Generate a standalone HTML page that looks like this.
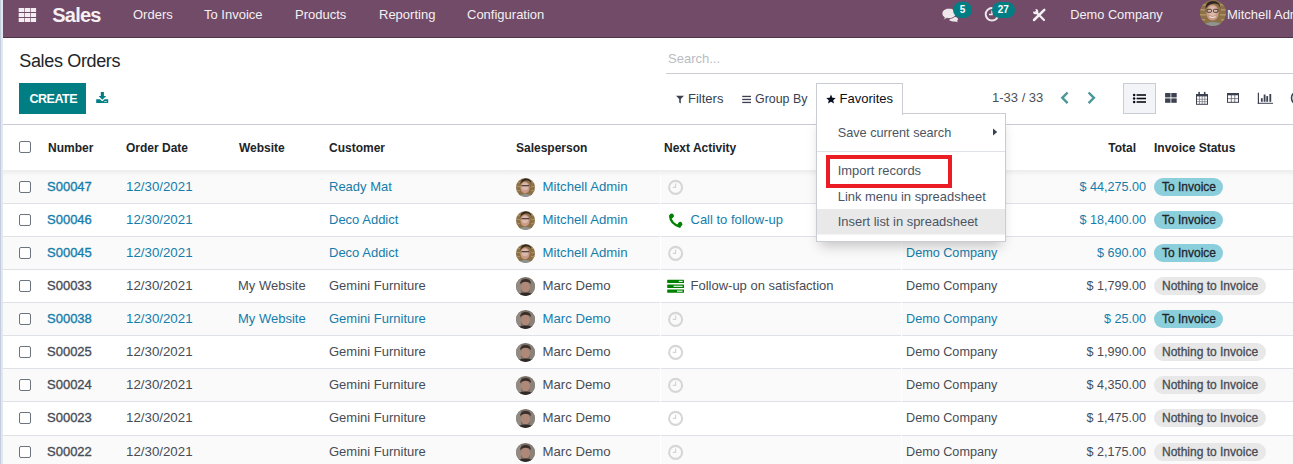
<!DOCTYPE html>
<html><head><meta charset="utf-8">
<style>
html,body{margin:0;padding:0;}
body{width:1293px;height:464px;overflow:hidden;position:relative;background:#fff;font-family:"Liberation Sans",sans-serif;color:#4c4c4c;}
.a{position:absolute;}
.t{position:absolute;white-space:nowrap;line-height:20px;font-size:13px;z-index:2;}
svg{position:absolute;left:0;top:0;overflow:visible;}
#strip{left:0;top:0;width:3px;height:464px;background:linear-gradient(to right,#c3cddc 0,#c3cddc 1px,#dfe6ef 1px,#e3e9f1 3px);z-index:10;}
#nav{left:3px;top:0;width:1290px;height:37px;background:#714b67;border-bottom:1px solid #4f3448;}
.nv{color:#f4f0f3;}
.hdr{font-weight:bold;font-size:12px;color:#212529;}
.line{position:absolute;height:1px;background:#dee2e6;z-index:1;}
.cb{position:absolute;width:10px;height:10px;border:1px solid #6c757d;border-radius:2px;background:#fff;z-index:2;}
.info{color:#157dab;}
.gray{color:#484c55;}
.badge{position:absolute;height:18px;border-radius:9px;font-size:11px;font-weight:bold;line-height:18px;white-space:nowrap;z-index:2;}
.bi{background:#8ccfdc;color:#212529;}
.bn{background:#e8e8e8;color:#474b53;}
.dd{color:#4b5563;}
</style></head>
<body>
<div id="strip" class="a"></div>
<div id="nav" class="a"></div>
<svg width="1293" height="40" style="z-index:3">
<g fill="#f1edf0">
<rect x="18.7" y="8" width="5.4" height="4"/><rect x="24.7" y="8" width="5.4" height="4"/><rect x="30.7" y="8" width="5.4" height="4"/>
<rect x="18.7" y="13" width="5.4" height="4"/><rect x="24.7" y="13" width="5.4" height="4"/><rect x="30.7" y="13" width="5.4" height="4"/>
<rect x="18.7" y="18" width="5.4" height="4"/><rect x="24.7" y="18" width="5.4" height="4"/><rect x="30.7" y="18" width="5.4" height="4"/>
</g>
<!-- chat icon -->
<g fill="#eee8ec">
<path d="M951.5,16.5 c1.8,0 6.5,0.2 6.5,2.6 c0,0.9 -0.5,1.5 -1.2,1.9 l1.4,1.2 l-3.5,-0.7 c-1.5,0.1 -3.8,-0.2 -5.5,-1.2z"/>
</g>
<path d="M949,8.2 c3.9,0 7,2.3 7,5.2 s-3.1,5.2 -7,5.2 c-0.8,0 -1.6,-0.1 -2.3,-0.3 l-3.4,2 l1.1,-2.9 c-1.5,-1 -2.4,-2.4 -2.4,-4 c0,-2.9 3.1,-5.2 7,-5.2z" fill="#eee8ec" stroke="#714b67" stroke-width="0.9"/>
<rect x="953" y="1.8" width="19" height="16.3" rx="8.2" fill="#017e84"/>
<text x="962.5" y="13" font-family="Liberation Sans" font-weight="bold" font-size="10" fill="#fff" text-anchor="middle">5</text>
<!-- activity clock -->
<circle cx="992" cy="14.3" r="6.3" fill="none" stroke="#eee8ec" stroke-width="2"/>
<path d="M992,10.5 v4 h-3" fill="none" stroke="#eee8ec" stroke-width="1.4"/>
<rect x="992" y="1.9" width="23" height="16.2" rx="8.1" fill="#017e84"/>
<text x="1003.3" y="13" font-family="Liberation Sans" font-weight="bold" font-size="10" fill="#fff" text-anchor="middle">27</text>
<!-- tools -->
<g stroke="#f4f0f3" fill="none">
<line x1="1034" y1="20" x2="1044.3" y2="9.8" stroke-width="2.5" stroke-linecap="round"/>
<line x1="1036.8" y1="12.8" x2="1044" y2="20" stroke-width="2.2" stroke-linecap="round"/>
</g>
<circle cx="1035.7" cy="11.7" r="2.6" fill="#f4f0f3"/>
<circle cx="1034.3" cy="10.3" r="1.5" fill="#714b67"/>
</svg>
<div class="a" style="left:1200px;top:0px;width:26px;height:26px;border-radius:50%;overflow:hidden;z-index:3"><svg width="26" height="26" viewBox="1200 0 26 26"><g>
<rect x="1200" y="0" width="26" height="26" fill="#8c7148"/>
<g fill="#b89b68" opacity=".8">
<rect x="1200" y="4" width="6" height="1.6"/><rect x="1220" y="4" width="6" height="1.6"/>
<rect x="1200" y="9" width="5" height="1.6"/><rect x="1221" y="9" width="5" height="1.6"/>
<rect x="1200" y="14" width="6" height="1.6"/><rect x="1220" y="14" width="6" height="1.6"/>
<rect x="1200" y="19" width="5" height="1.6"/><rect x="1221" y="19" width="5" height="1.6"/>
</g>
<ellipse cx="1212.5" cy="12.5" rx="6.2" ry="8" fill="#c99a86"/>
<ellipse cx="1212.5" cy="11" rx="4.5" ry="5" fill="#dcb8a8"/>
<path d="M1205.5,9 q0,-8 7.5,-8 q7,0 7.5,7.5 q-1,-3.5 -3,-4.5 q-3,-1 -6,0 q-4,1 -6,5z" fill="#2f2622"/>
<g fill="none" stroke="#3a302c" stroke-width="0.9"><rect x="1207" y="9.3" width="4.5" height="3" rx="1"/><rect x="1213.5" y="9.3" width="4.5" height="3" rx="1"/></g>
<path d="M1209.5,16.5 q3,2 6,0" stroke="#f2e6e0" stroke-width="1.1" fill="none"/>
<path d="M1202,27 q3,-5 11,-5 q8,0 11,5z" fill="#8d9492"/>
</g>
</svg></div>

<div class="t nv" style="left:52.3px;top:5px;font-size:20px;font-weight:bold;letter-spacing:-0.8px;">Sales</div>
<div class="t nv" style="left:133px;top:5px;font-size:13px;">Orders</div>
<div class="t nv" style="left:204px;top:5px;font-size:13px;">To Invoice</div>
<div class="t nv" style="left:295px;top:5px;font-size:13px;">Products</div>
<div class="t nv" style="left:379px;top:5px;font-size:13px;">Reporting</div>
<div class="t nv" style="left:467px;top:5px;font-size:13px;">Configuration</div>
<div class="t nv" style="left:1070.2px;top:5px;font-size:12.8px;">Demo Company</div>
<div class="t nv" style="left:1227px;top:5px;font-size:13px;">Mitchell Admin</div>
<div class="t " style="left:19.3px;top:51px;font-size:18px;color:#212529;letter-spacing:-0.35px;">Sales Orders</div>
<div class="a" style="left:19px;top:83px;width:67px;height:31px;background:#017e84;"></div>
<div class="t " style="left:29.4px;top:89px;font-size:12.5px;color:#fff;font-weight:bold;letter-spacing:-0.45px;">CREATE</div>
<div class="t " style="left:668px;top:49px;font-size:13px;color:#b8bcc4;">Search...</div>
<div class="a" style="left:666px;top:73px;width:627px;height:1px;background:#c9ccd2;"></div>
<div class="t " style="left:688px;top:89px;font-size:13px;color:#374151;">Filters</div>
<div class="t " style="left:755px;top:89px;font-size:12.4px;color:#374151;">Group By</div>
<div class="t " style="left:992px;top:88px;font-size:13px;color:#495057;">1-33 / 33</div>
<svg width="1293" height="130" style="z-index:3">
<!-- download -->
<g fill="#017e84">
<path d="M100.8,92 h3.1 v4 h2.2 l-3.75,3.8 l-3.75,-3.8 h2.2z"/>
<path d="M96.2,99.2 h3.8 l2.3,2.3 l2.3,-2.3 h3.6 v3.8 h-12z"/>
</g>
<rect x="104.3" y="101.2" width="2.5" height="0.9" fill="#cfe6e7"/>
<!-- filter -->
<path d="M676,95.8 h8 l-3.2,3.2 v4.6 l-1.6,-1.2 v-3.4z" fill="#3c4050"/>
<!-- group by -->
<g fill="#3c4050">
<rect x="742.2" y="95.8" width="8.8" height="1.3"/>
<rect x="742.2" y="98.8" width="8.8" height="1.3"/>
<rect x="742.2" y="101.8" width="8.8" height="1.3"/>
</g>
<!-- chevrons -->
<g fill="none" stroke="#4a9699" stroke-width="2.4" stroke-linecap="butt">
<path d="M1067.6,92.5 l-5.3,5.3 l5.3,5.3"/>
<path d="M1088.6,92.5 l5.3,5.3 l-5.3,5.3"/>
</g>
<!-- view switcher active box -->
<rect x="1123.5" y="83.5" width="32" height="30" fill="#f3f4f8" stroke="#c9ccd2" stroke-width="1"/>
<!-- list icon -->
<g fill="#0b0d14">
<circle cx="1134.1" cy="95" r="1.25"/><circle cx="1134.1" cy="98.5" r="1.25"/><circle cx="1134.1" cy="102" r="1.25"/>
<rect x="1136.6" y="94.2" width="9.4" height="1.6"/><rect x="1136.6" y="97.7" width="9.4" height="1.6"/><rect x="1136.6" y="101.2" width="9.4" height="1.6"/>
</g>
<!-- kanban -->
<g fill="#3d4250">
<rect x="1165.1" y="93" width="5.4" height="4.4"/><rect x="1171.3" y="93" width="5.4" height="4.4"/>
<rect x="1165.1" y="98.4" width="5.4" height="4.4"/><rect x="1171.3" y="98.4" width="5.4" height="4.4"/>
</g>
<!-- calendar -->
<g>
<rect x="1196.5" y="94.5" width="11" height="9.8" fill="#fff" stroke="#3d4250" stroke-width="1"/>
<rect x="1196" y="94" width="12" height="2.4" fill="#3d4250"/>
<rect x="1198.3" y="91.9" width="1.6" height="3" fill="#3d4250"/><rect x="1203.9" y="91.9" width="1.6" height="3" fill="#3d4250"/>
<g fill="#3d4250" opacity=".75">
<rect x="1199.2" y="96" width="0.7" height="8"/><rect x="1201.8" y="96" width="0.7" height="8"/><rect x="1204.5" y="96" width="0.7" height="8"/>
<rect x="1196.5" y="98.8" width="11" height="0.7"/><rect x="1196.5" y="101.4" width="11" height="0.7"/>
</g>
</g>
<!-- pivot -->
<g>
<rect x="1227.5" y="93.5" width="11" height="8.8" fill="#fff" stroke="#3d4250" stroke-width="1"/>
<rect x="1227" y="93" width="12" height="2.3" fill="#3d4250"/>
<g fill="#3d4250" opacity=".8">
<rect x="1230.9" y="95" width="0.8" height="7.5"/><rect x="1234.4" y="95" width="0.8" height="7.5"/>
<rect x="1227.5" y="98.3" width="11" height="0.8"/>
</g>
</g>
<!-- graph -->
<g fill="#3d4250">
<rect x="1257.8" y="92.7" width="1.2" height="11.1"/>
<rect x="1257.8" y="102.8" width="15.2" height="1"/>
<rect x="1260.9" y="98.2" width="1.8" height="3.6"/>
<rect x="1263.7" y="94.5" width="1.8" height="7.3"/>
<rect x="1266.3" y="96.1" width="1.8" height="5.7"/>
<rect x="1269.4" y="94" width="1.8" height="7.8"/>
</g>
<circle cx="1298" cy="98" r="6.5" fill="none" stroke="#3d4250" stroke-width="1.6"/>
</svg>
<div class="line" style="left:3px;top:124px;width:1290px;background:#c9ccd2;"></div>
<div class="cb" style="left:19px;top:141px;"></div>
<div class="t hdr" style="left:48px;top:138px;font-size:12px;">Number</div>
<div class="t hdr" style="left:126px;top:138px;font-size:12px;">Order Date</div>
<div class="t hdr" style="left:239px;top:138px;font-size:12px;">Website</div>
<div class="t hdr" style="left:329px;top:138px;font-size:12px;">Customer</div>
<div class="t hdr" style="left:516px;top:138px;font-size:12px;">Salesperson</div>
<div class="t hdr" style="left:664px;top:138px;font-size:12px;">Next Activity</div>
<div class="t hdr" style="left:1154px;top:138px;font-size:12px;">Invoice Status</div>
<div class="t hdr" style="right:157px;top:138px;font-size:12px;">Total</div>
<div class="a" style="left:3px;top:170px;width:1290px;height:6px;background:linear-gradient(#ececec,rgba(250,250,250,0));z-index:3"></div>
<div class="a" style="left:3px;top:170px;width:1290px;height:33px;background:#fafafa;"></div>
<div class="cb" style="left:19px;top:181px;"></div>
<div class="t info" style="left:47px;top:177px;font-size:13px;-webkit-text-stroke:0.35px currentColor;">S00047</div>
<div class="t info" style="left:126px;top:177px;font-size:13.3px;">12/30/2021</div>
<div class="t info" style="left:329px;top:177px;font-size:13px;">Ready Mat</div>
<div class="a" style="left:516px;top:178px;width:19px;height:19px;border-radius:50%;overflow:hidden;z-index:2"><svg width="19" height="19" viewBox="516 178 19 19"><g><rect x="516" y="178" width="19" height="19" fill="#8a6f47"/>
<g fill="#b39763" opacity=".8"><rect x="516" y="182" width="4" height="1.2"/><rect x="531" y="182" width="4" height="1.2"/><rect x="516" y="186" width="4" height="1.2"/><rect x="531" y="186" width="4" height="1.2"/><rect x="516" y="190" width="4" height="1.2"/><rect x="531" y="190" width="4" height="1.2"/></g>
<ellipse cx="525.0" cy="187.5" rx="4.6" ry="6" fill="#c99a86"/>
<ellipse cx="525.0" cy="186.5" rx="3.3" ry="3.8" fill="#dcb8a8"/>
<path d="M520.5,184.5 q0,-6 5.5,-6 q5,0 5.5,5.5 q-1,-2.5 -2.5,-3.3 q-2,-0.8 -4.5,0 q-3,0.8 -4,3.8z" fill="#2f2622"/>
<rect x="521.5" y="185.0" width="7.5" height="1.3" fill="#3a302c" opacity=".85"/>
<path d="M517,198 q2,-4 8.5,-4 q6.5,0 8.5,4z" fill="#8d9492"/></g></svg></div>
<div class="t info" style="left:542.5px;top:177px;font-size:13.2px;">Mitchell Admin</div>
<svg width="1293" height="464" style="z-index:2"><circle cx="675.6" cy="187.4" r="6.5" fill="none" stroke="#d6d6d6" stroke-width="2.1"/>
<path d="M675.6,183.6 v3.8 h-2.8" fill="none" stroke="#d4d4d4" stroke-width="1.2"/></svg>
<div class="t info" style="left:906px;top:177px;font-size:12.65px;">Demo Company</div>
<div class="t info" style="right:147px;top:177px;font-size:12.6px;">$ 44,275.00</div>
<div class="badge bi" style="left:1154px;top:178px;width:69px;"><span style="position:absolute;left:8px;top:0;font-size:12px;font-weight:normal;-webkit-text-stroke:0.3px currentColor">To Invoice</span></div>
<div class="a" style="left:3px;top:203px;width:1290px;height:33px;background:#fff;"></div>
<div class="line" style="left:3px;top:203px;width:1290px;"></div>
<div class="cb" style="left:19px;top:214px;"></div>
<div class="t info" style="left:47px;top:210px;font-size:13px;-webkit-text-stroke:0.35px currentColor;">S00046</div>
<div class="t info" style="left:126px;top:210px;font-size:13.3px;">12/30/2021</div>
<div class="t info" style="left:329px;top:210px;font-size:13px;">Deco Addict</div>
<div class="a" style="left:516px;top:211px;width:19px;height:19px;border-radius:50%;overflow:hidden;z-index:2"><svg width="19" height="19" viewBox="516 211 19 19"><g><rect x="516" y="211" width="19" height="19" fill="#8a6f47"/>
<g fill="#b39763" opacity=".8"><rect x="516" y="215" width="4" height="1.2"/><rect x="531" y="215" width="4" height="1.2"/><rect x="516" y="219" width="4" height="1.2"/><rect x="531" y="219" width="4" height="1.2"/><rect x="516" y="223" width="4" height="1.2"/><rect x="531" y="223" width="4" height="1.2"/></g>
<ellipse cx="525.0" cy="220.5" rx="4.6" ry="6" fill="#c99a86"/>
<ellipse cx="525.0" cy="219.5" rx="3.3" ry="3.8" fill="#dcb8a8"/>
<path d="M520.5,217.5 q0,-6 5.5,-6 q5,0 5.5,5.5 q-1,-2.5 -2.5,-3.3 q-2,-0.8 -4.5,0 q-3,0.8 -4,3.8z" fill="#2f2622"/>
<rect x="521.5" y="218.0" width="7.5" height="1.3" fill="#3a302c" opacity=".85"/>
<path d="M517,231 q2,-4 8.5,-4 q6.5,0 8.5,4z" fill="#8d9492"/></g></svg></div>
<div class="t info" style="left:542.5px;top:210px;font-size:13.2px;">Mitchell Admin</div>
<svg width="1293" height="464" style="z-index:2"><g fill="#008000">
<path d="M670.2,216.5 q0.2,7 9.6,10.2" stroke="#008000" stroke-width="2.3" stroke-linecap="round" fill="none"/>
<ellipse cx="671.6" cy="215.9" rx="2.3" ry="2.4" transform="rotate(-35 671.6 215.9)"/>
<ellipse cx="680" cy="224.3" rx="2.5" ry="2.2" transform="rotate(-40 680 224.3)"/>
</g></svg></div>
<div class="t info" style="left:690.5px;top:210px;font-size:13px;">Call to follow-up</div>
<div class="t info" style="left:906px;top:210px;font-size:12.65px;">Demo Company</div>
<div class="t info" style="right:147px;top:210px;font-size:12.6px;">$ 18,400.00</div>
<div class="badge bi" style="left:1154px;top:211px;width:69px;"><span style="position:absolute;left:8px;top:0;font-size:12px;font-weight:normal;-webkit-text-stroke:0.3px currentColor">To Invoice</span></div>
<div class="a" style="left:3px;top:236px;width:1290px;height:33px;background:#fafafa;"></div>
<div class="line" style="left:3px;top:236px;width:1290px;"></div>
<div class="cb" style="left:19px;top:247px;"></div>
<div class="t info" style="left:47px;top:243px;font-size:13px;-webkit-text-stroke:0.35px currentColor;">S00045</div>
<div class="t info" style="left:126px;top:243px;font-size:13.3px;">12/30/2021</div>
<div class="t info" style="left:329px;top:243px;font-size:13px;">Deco Addict</div>
<div class="a" style="left:516px;top:244px;width:19px;height:19px;border-radius:50%;overflow:hidden;z-index:2"><svg width="19" height="19" viewBox="516 244 19 19"><g><rect x="516" y="244" width="19" height="19" fill="#8a6f47"/>
<g fill="#b39763" opacity=".8"><rect x="516" y="248" width="4" height="1.2"/><rect x="531" y="248" width="4" height="1.2"/><rect x="516" y="252" width="4" height="1.2"/><rect x="531" y="252" width="4" height="1.2"/><rect x="516" y="256" width="4" height="1.2"/><rect x="531" y="256" width="4" height="1.2"/></g>
<ellipse cx="525.0" cy="253.5" rx="4.6" ry="6" fill="#c99a86"/>
<ellipse cx="525.0" cy="252.5" rx="3.3" ry="3.8" fill="#dcb8a8"/>
<path d="M520.5,250.5 q0,-6 5.5,-6 q5,0 5.5,5.5 q-1,-2.5 -2.5,-3.3 q-2,-0.8 -4.5,0 q-3,0.8 -4,3.8z" fill="#2f2622"/>
<rect x="521.5" y="251.0" width="7.5" height="1.3" fill="#3a302c" opacity=".85"/>
<path d="M517,264 q2,-4 8.5,-4 q6.5,0 8.5,4z" fill="#8d9492"/></g></svg></div>
<div class="t info" style="left:542.5px;top:243px;font-size:13.2px;">Mitchell Admin</div>
<svg width="1293" height="464" style="z-index:2"><circle cx="675.6" cy="253.4" r="6.5" fill="none" stroke="#d6d6d6" stroke-width="2.1"/>
<path d="M675.6,249.6 v3.8 h-2.8" fill="none" stroke="#d4d4d4" stroke-width="1.2"/></svg>
<div class="t info" style="left:906px;top:243px;font-size:12.65px;">Demo Company</div>
<div class="t info" style="right:147px;top:243px;font-size:12.6px;">$ 690.00</div>
<div class="badge bi" style="left:1154px;top:244px;width:69px;"><span style="position:absolute;left:8px;top:0;font-size:12px;font-weight:normal;-webkit-text-stroke:0.3px currentColor">To Invoice</span></div>
<div class="a" style="left:3px;top:269px;width:1290px;height:33px;background:#fff;"></div>
<div class="line" style="left:3px;top:269px;width:1290px;"></div>
<div class="cb" style="left:19px;top:280px;"></div>
<div class="t gray" style="left:47px;top:276px;font-size:13px;-webkit-text-stroke:0.35px currentColor;">S00033</div>
<div class="t gray" style="left:126px;top:276px;font-size:13.3px;">12/30/2021</div>
<div class="t gray" style="left:238px;top:276px;font-size:13px;">My Website</div>
<div class="t gray" style="left:329px;top:276px;font-size:13px;">Gemini Furniture</div>
<div class="a" style="left:516px;top:277px;width:19px;height:19px;border-radius:50%;overflow:hidden;z-index:2"><svg width="19" height="19" viewBox="516 277 19 19"><g><rect x="516" y="277" width="19" height="19" fill="#7a7068"/>
<rect x="516" y="277" width="5" height="19" fill="#948a82"/>
<rect x="530" y="277" width="5" height="19" fill="#8a8279"/>
<ellipse cx="525.5" cy="287.0" rx="4.6" ry="5.4" fill="#b08878"/>
<path d="M520.0,284.5 q0,-5.5 5.5,-5.5 q5.5,0 5.5,5 q-1.5,-2.3 -5.5,-2.3 q-4,0 -5.5,2.8z" fill="#3a2e2b"/>
<path d="M516,297 q2,-4.5 9.5,-4.5 q7.5,0 9.5,4.5z" fill="#2f2927"/></g></svg></div>
<div class="t gray" style="left:542.5px;top:276px;font-size:13.2px;">Marc Demo</div>
<svg width="1293" height="464" style="z-index:2"><g fill="#008000">
<rect x="667.2" y="279.7" width="16.8" height="3.3" rx="0.5"/><rect x="667.2" y="284.59999999999997" width="16.8" height="3.3" rx="0.5"/><rect x="667.2" y="289.5" width="16.8" height="3.3" rx="0.5"/></g>
<g fill="#fff"><rect x="678.8" y="280.8" width="3.8" height="1.1"/><rect x="673.5" y="285.7" width="9.1" height="1.1"/><rect x="677" y="290.59999999999997" width="5.6" height="1.1"/></g></svg></div>
<div class="t gray" style="left:690.5px;top:276px;font-size:13px;">Follow-up on satisfaction</div>
<div class="t gray" style="left:906px;top:276px;font-size:12.65px;">Demo Company</div>
<div class="t gray" style="right:147px;top:276px;font-size:12.6px;">$ 1,799.00</div>
<div class="badge bn" style="left:1154px;top:277px;width:112px;"><span style="position:absolute;left:8px;top:0;font-size:12px;font-weight:normal;-webkit-text-stroke:0.3px currentColor">Nothing to Invoice</span></div>
<div class="a" style="left:3px;top:302px;width:1290px;height:33px;background:#fafafa;"></div>
<div class="line" style="left:3px;top:302px;width:1290px;"></div>
<div class="cb" style="left:19px;top:313px;"></div>
<div class="t info" style="left:47px;top:309px;font-size:13px;-webkit-text-stroke:0.35px currentColor;">S00038</div>
<div class="t info" style="left:126px;top:309px;font-size:13.3px;">12/30/2021</div>
<div class="t info" style="left:238px;top:309px;font-size:13px;">My Website</div>
<div class="t info" style="left:329px;top:309px;font-size:13px;">Gemini Furniture</div>
<div class="a" style="left:516px;top:310px;width:19px;height:19px;border-radius:50%;overflow:hidden;z-index:2"><svg width="19" height="19" viewBox="516 310 19 19"><g><rect x="516" y="310" width="19" height="19" fill="#7a7068"/>
<rect x="516" y="310" width="5" height="19" fill="#948a82"/>
<rect x="530" y="310" width="5" height="19" fill="#8a8279"/>
<ellipse cx="525.5" cy="320.0" rx="4.6" ry="5.4" fill="#b08878"/>
<path d="M520.0,317.5 q0,-5.5 5.5,-5.5 q5.5,0 5.5,5 q-1.5,-2.3 -5.5,-2.3 q-4,0 -5.5,2.8z" fill="#3a2e2b"/>
<path d="M516,330 q2,-4.5 9.5,-4.5 q7.5,0 9.5,4.5z" fill="#2f2927"/></g></svg></div>
<div class="t info" style="left:542.5px;top:309px;font-size:13.2px;">Marc Demo</div>
<svg width="1293" height="464" style="z-index:2"><circle cx="675.6" cy="319.4" r="6.5" fill="none" stroke="#d6d6d6" stroke-width="2.1"/>
<path d="M675.6,315.59999999999997 v3.8 h-2.8" fill="none" stroke="#d4d4d4" stroke-width="1.2"/></svg>
<div class="t info" style="left:906px;top:309px;font-size:12.65px;">Demo Company</div>
<div class="t info" style="right:147px;top:309px;font-size:12.6px;">$ 25.00</div>
<div class="badge bi" style="left:1154px;top:310px;width:69px;"><span style="position:absolute;left:8px;top:0;font-size:12px;font-weight:normal;-webkit-text-stroke:0.3px currentColor">To Invoice</span></div>
<div class="a" style="left:3px;top:335px;width:1290px;height:33px;background:#fff;"></div>
<div class="line" style="left:3px;top:335px;width:1290px;"></div>
<div class="cb" style="left:19px;top:346px;"></div>
<div class="t gray" style="left:47px;top:342px;font-size:13px;-webkit-text-stroke:0.35px currentColor;">S00025</div>
<div class="t gray" style="left:126px;top:342px;font-size:13.3px;">12/30/2021</div>
<div class="t gray" style="left:329px;top:342px;font-size:13px;">Gemini Furniture</div>
<div class="a" style="left:516px;top:343px;width:19px;height:19px;border-radius:50%;overflow:hidden;z-index:2"><svg width="19" height="19" viewBox="516 343 19 19"><g><rect x="516" y="343" width="19" height="19" fill="#7a7068"/>
<rect x="516" y="343" width="5" height="19" fill="#948a82"/>
<rect x="530" y="343" width="5" height="19" fill="#8a8279"/>
<ellipse cx="525.5" cy="353.0" rx="4.6" ry="5.4" fill="#b08878"/>
<path d="M520.0,350.5 q0,-5.5 5.5,-5.5 q5.5,0 5.5,5 q-1.5,-2.3 -5.5,-2.3 q-4,0 -5.5,2.8z" fill="#3a2e2b"/>
<path d="M516,363 q2,-4.5 9.5,-4.5 q7.5,0 9.5,4.5z" fill="#2f2927"/></g></svg></div>
<div class="t gray" style="left:542.5px;top:342px;font-size:13.2px;">Marc Demo</div>
<svg width="1293" height="464" style="z-index:2"><circle cx="675.6" cy="352.4" r="6.5" fill="none" stroke="#d6d6d6" stroke-width="2.1"/>
<path d="M675.6,348.59999999999997 v3.8 h-2.8" fill="none" stroke="#d4d4d4" stroke-width="1.2"/></svg>
<div class="t gray" style="left:906px;top:342px;font-size:12.65px;">Demo Company</div>
<div class="t gray" style="right:147px;top:342px;font-size:12.6px;">$ 1,990.00</div>
<div class="badge bn" style="left:1154px;top:343px;width:112px;"><span style="position:absolute;left:8px;top:0;font-size:12px;font-weight:normal;-webkit-text-stroke:0.3px currentColor">Nothing to Invoice</span></div>
<div class="a" style="left:3px;top:368px;width:1290px;height:33px;background:#fafafa;"></div>
<div class="line" style="left:3px;top:368px;width:1290px;"></div>
<div class="cb" style="left:19px;top:379px;"></div>
<div class="t gray" style="left:47px;top:375px;font-size:13px;-webkit-text-stroke:0.35px currentColor;">S00024</div>
<div class="t gray" style="left:126px;top:375px;font-size:13.3px;">12/30/2021</div>
<div class="t gray" style="left:329px;top:375px;font-size:13px;">Gemini Furniture</div>
<div class="a" style="left:516px;top:376px;width:19px;height:19px;border-radius:50%;overflow:hidden;z-index:2"><svg width="19" height="19" viewBox="516 376 19 19"><g><rect x="516" y="376" width="19" height="19" fill="#7a7068"/>
<rect x="516" y="376" width="5" height="19" fill="#948a82"/>
<rect x="530" y="376" width="5" height="19" fill="#8a8279"/>
<ellipse cx="525.5" cy="386.0" rx="4.6" ry="5.4" fill="#b08878"/>
<path d="M520.0,383.5 q0,-5.5 5.5,-5.5 q5.5,0 5.5,5 q-1.5,-2.3 -5.5,-2.3 q-4,0 -5.5,2.8z" fill="#3a2e2b"/>
<path d="M516,396 q2,-4.5 9.5,-4.5 q7.5,0 9.5,4.5z" fill="#2f2927"/></g></svg></div>
<div class="t gray" style="left:542.5px;top:375px;font-size:13.2px;">Marc Demo</div>
<svg width="1293" height="464" style="z-index:2"><circle cx="675.6" cy="385.4" r="6.5" fill="none" stroke="#d6d6d6" stroke-width="2.1"/>
<path d="M675.6,381.59999999999997 v3.8 h-2.8" fill="none" stroke="#d4d4d4" stroke-width="1.2"/></svg>
<div class="t gray" style="left:906px;top:375px;font-size:12.65px;">Demo Company</div>
<div class="t gray" style="right:147px;top:375px;font-size:12.6px;">$ 4,350.00</div>
<div class="badge bn" style="left:1154px;top:376px;width:112px;"><span style="position:absolute;left:8px;top:0;font-size:12px;font-weight:normal;-webkit-text-stroke:0.3px currentColor">Nothing to Invoice</span></div>
<div class="a" style="left:3px;top:401px;width:1290px;height:34px;background:#fff;"></div>
<div class="line" style="left:3px;top:401px;width:1290px;"></div>
<div class="cb" style="left:19px;top:412px;"></div>
<div class="t gray" style="left:47px;top:408px;font-size:13px;-webkit-text-stroke:0.35px currentColor;">S00023</div>
<div class="t gray" style="left:126px;top:408px;font-size:13.3px;">12/30/2021</div>
<div class="t gray" style="left:329px;top:408px;font-size:13px;">Gemini Furniture</div>
<div class="a" style="left:516px;top:409px;width:19px;height:19px;border-radius:50%;overflow:hidden;z-index:2"><svg width="19" height="19" viewBox="516 409 19 19"><g><rect x="516" y="409" width="19" height="19" fill="#7a7068"/>
<rect x="516" y="409" width="5" height="19" fill="#948a82"/>
<rect x="530" y="409" width="5" height="19" fill="#8a8279"/>
<ellipse cx="525.5" cy="419.0" rx="4.6" ry="5.4" fill="#b08878"/>
<path d="M520.0,416.5 q0,-5.5 5.5,-5.5 q5.5,0 5.5,5 q-1.5,-2.3 -5.5,-2.3 q-4,0 -5.5,2.8z" fill="#3a2e2b"/>
<path d="M516,429 q2,-4.5 9.5,-4.5 q7.5,0 9.5,4.5z" fill="#2f2927"/></g></svg></div>
<div class="t gray" style="left:542.5px;top:408px;font-size:13.2px;">Marc Demo</div>
<svg width="1293" height="464" style="z-index:2"><circle cx="675.6" cy="418.4" r="6.5" fill="none" stroke="#d6d6d6" stroke-width="2.1"/>
<path d="M675.6,414.59999999999997 v3.8 h-2.8" fill="none" stroke="#d4d4d4" stroke-width="1.2"/></svg>
<div class="t gray" style="left:906px;top:408px;font-size:12.65px;">Demo Company</div>
<div class="t gray" style="right:147px;top:408px;font-size:12.6px;">$ 1,475.00</div>
<div class="badge bn" style="left:1154px;top:409px;width:112px;"><span style="position:absolute;left:8px;top:0;font-size:12px;font-weight:normal;-webkit-text-stroke:0.3px currentColor">Nothing to Invoice</span></div>
<div class="a" style="left:3px;top:435px;width:1290px;height:33px;background:#fafafa;"></div>
<div class="line" style="left:3px;top:435px;width:1290px;"></div>
<div class="cb" style="left:19px;top:446px;"></div>
<div class="t gray" style="left:47px;top:442px;font-size:13px;-webkit-text-stroke:0.35px currentColor;">S00022</div>
<div class="t gray" style="left:126px;top:442px;font-size:13.3px;">12/30/2021</div>
<div class="t gray" style="left:329px;top:442px;font-size:13px;">Gemini Furniture</div>
<div class="a" style="left:516px;top:443px;width:19px;height:19px;border-radius:50%;overflow:hidden;z-index:2"><svg width="19" height="19" viewBox="516 443 19 19"><g><rect x="516" y="443" width="19" height="19" fill="#7a7068"/>
<rect x="516" y="443" width="5" height="19" fill="#948a82"/>
<rect x="530" y="443" width="5" height="19" fill="#8a8279"/>
<ellipse cx="525.5" cy="453.0" rx="4.6" ry="5.4" fill="#b08878"/>
<path d="M520.0,450.5 q0,-5.5 5.5,-5.5 q5.5,0 5.5,5 q-1.5,-2.3 -5.5,-2.3 q-4,0 -5.5,2.8z" fill="#3a2e2b"/>
<path d="M516,463 q2,-4.5 9.5,-4.5 q7.5,0 9.5,4.5z" fill="#2f2927"/></g></svg></div>
<div class="t gray" style="left:542.5px;top:442px;font-size:13.2px;">Marc Demo</div>
<svg width="1293" height="464" style="z-index:2"><circle cx="675.6" cy="452.4" r="6.5" fill="none" stroke="#d6d6d6" stroke-width="2.1"/>
<path d="M675.6,448.59999999999997 v3.8 h-2.8" fill="none" stroke="#d4d4d4" stroke-width="1.2"/></svg>
<div class="t gray" style="left:906px;top:442px;font-size:12.65px;">Demo Company</div>
<div class="t gray" style="right:147px;top:442px;font-size:12.6px;">$ 2,175.00</div>
<div class="badge bn" style="left:1154px;top:443px;width:112px;"><span style="position:absolute;left:8px;top:0;font-size:12px;font-weight:normal;-webkit-text-stroke:0.3px currentColor">Nothing to Invoice</span></div>
<div class="a" style="left:660px;top:174px;width:1px;height:290px;background:#fff;z-index:1"></div>
<div class="a" style="left:901px;top:174px;width:1px;height:290px;background:#fff;z-index:1"></div>
<div class="a" style="left:816px;top:83px;width:85px;height:31px;background:#fff;border:1px solid #c9ccd2;border-bottom:none;z-index:5"></div>
<div class="a" style="left:816px;top:113px;width:188px;height:127px;background:#fff;border:1px solid #c9ccd2;z-index:4;box-shadow:0 8px 12px -4px rgba(0,0,0,.22)"></div>
<div class="a" style="left:817px;top:113px;width:85px;height:3px;background:#fff;z-index:6"></div>
<svg width="1293" height="464" style="z-index:7">
<path d="M831,94.6 l1.35,3.1 l3.4,0.3 l-2.55,2.2 l0.8,3.3 l-3,-1.8 l-3,1.8 l0.8,-3.3 l-2.55,-2.2 l3.4,-0.3z" fill="#0a0f1e"/>
<path d="M993,128.4 l4.2,3.6 l-4.2,3.6z" fill="#374151"/>
<rect x="817" y="151" width="188" height="1" fill="#dee2e6"/>
<rect x="817" y="209" width="188" height="25.5" fill="#e9e9e9"/>
<rect x="828" y="157" width="122" height="29" fill="none" stroke="#ec1c24" stroke-width="4"/>
</svg>
<div class="t " style="left:839.6px;top:89px;font-size:13px;color:#0b1020;z-index:8;">Favorites</div>
<div class="t dd" style="left:837.7px;top:123px;font-size:12.7px;z-index:8;">Save current search</div>
<div class="t dd" style="left:837.7px;top:161px;font-size:12.95px;z-index:8;">Import records</div>
<div class="t dd" style="left:837.7px;top:187px;font-size:12.95px;z-index:8;">Link menu in spreadsheet</div>
<div class="t dd" style="left:837.7px;top:212px;font-size:12.95px;z-index:8;">Insert list in spreadsheet</div>
</body></html>
